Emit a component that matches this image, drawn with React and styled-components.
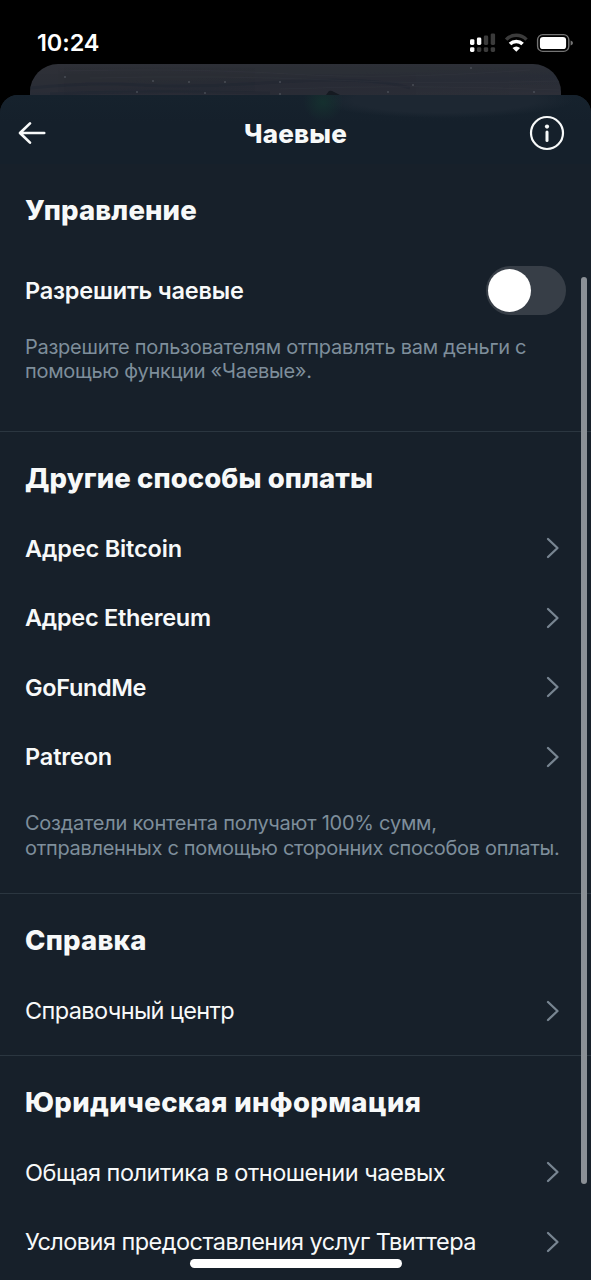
import styled, { createGlobalStyle } from "styled-components";

const otherWays = [
  { label: "Адрес Bitcoin", spacing: -0.15 },
  { label: "Адрес Ethereum", spacing: -0.28 },
  { label: "GoFundMe", spacing: -0.35 },
  { label: "Patreon", spacing: -0.15 },
];

const legal = [
  { label: "Общая политика в отношении чаевых", spacing: -0.48 },
  { label: "Условия предоставления услуг Твиттера", spacing: -0.54 },
];

const specks = [
  [35, 13], [123, 17], [159, 18], [195, 18], [250, 18], [107, 28], [175, 29],
  [250, 30], [358, 28], [504, 28], [441, 4], [383, 21],
];

export default function App() {
  return (
    <Screen>
      <GlobalStyle />
      <StatusBar>
        <Time>10:24</Time>
        <StatusIcons />
      </StatusBar>
      <BackCard>
        <CoverTexture />
      </BackCard>
      <Sheet>
        <Header>
          <IconButton aria-label="Назад">
            <BackIcon />
          </IconButton>
          <HeaderTitle>Чаевые</HeaderTitle>
          <IconButton aria-label="Информация">
            <InfoIcon />
          </IconButton>
        </Header>

        <Section>
          <SectionTitle $spacing={0.1}>Управление</SectionTitle>
          <SwitchRow>
            <Label $bold $spacing={-0.2}>
              Разрешить чаевые
            </Label>
            <Switch role="switch" aria-checked="false">
              <Knob />
            </Switch>
          </SwitchRow>
          <Note $bottom="47px">
            <NoteLine $spacing={-0.26}>Разрешите пользователям отправлять вам деньги с</NoteLine>
            <NoteLine $spacing={-0.28}>помощью функции «Чаевые».</NoteLine>
          </Note>
        </Section>

        <Section $line>
          <SectionTitle $spacing={0.1}>Другие способы оплаты</SectionTitle>
          {otherWays.map((item) => (
            <LinkRow key={item.label} bold {...item} />
          ))}
          <Note $top="19px" $bottom="31.5px" $lineHeight="25.5px">
            <NoteLine $spacing={-0.24}>Создатели контента получают 100% сумм,</NoteLine>
            <NoteLine $spacing={-0.31}>отправленных с помощью сторонних способов оплаты.</NoteLine>
          </Note>
        </Section>

        <Section $line $bottom="9px">
          <SectionTitle $spacing={0.2}>Справка</SectionTitle>
          <LinkRow label="Справочный центр" spacing={-0.62} />
        </Section>

        <Section $line>
          <SectionTitle $spacing={0.36}>Юридическая информация</SectionTitle>
          {legal.map((item) => (
            <LinkRow key={item.label} {...item} />
          ))}
        </Section>
      </Sheet>
      <ScrollThumb />
      <HomeIndicator />
    </Screen>
  );
}

function LinkRow({ label, bold, spacing }) {
  return (
    <Row>
      <Label $bold={bold} $spacing={spacing}>
        {label}
      </Label>
      <Chevron width="14" height="22" viewBox="0 0 14 22">
        <path d="M2 2L11.5 11L2 20" />
      </Chevron>
    </Row>
  );
}

function CoverTexture() {
  return (
    <svg width="531" height="31" viewBox="0 0 531 31" fill="none">
      <g stroke="#202631" strokeWidth="3" opacity="0.45">
        <path d="M0 24Q60 18 110 21T250 18T380 24" />
        <path d="M20 30Q120 26 240 29" />
      </g>
      <g stroke="#383b43" strokeWidth="1" opacity="0.3">
        <path d="M30 7Q160 4 260 10T500 6" />
        <path d="M60 14Q190 11 300 16T528 17" />
        <path d="M250 25Q380 20 530 26" />
      </g>
      <g fill="#565b65" opacity="0.7">
        {specks.map(([x, y]) => (
          <circle key={`${x}-${y}`} cx={x} cy={y} r="1" />
        ))}
      </g>
      <path d="M296 31L299 27Q301 26 304 28L310 31Z" fill="#151a21" />
    </svg>
  );
}

function BackIcon() {
  return (
    <svg width="30" height="26" viewBox="0 0 30 26" fill="none">
      <path
        d="M13 3.4L3 13L13 22.6M3.4 13H27.2"
        stroke="#f7f9f9"
        strokeWidth="2.7"
        strokeLinecap="round"
        strokeLinejoin="round"
      />
    </svg>
  );
}

function InfoIcon() {
  return (
    <svg width="36" height="36" viewBox="0 0 36 36" fill="none">
      <circle cx="18" cy="18" r="16" stroke="#f7f9f9" strokeWidth="2.2" />
      <circle cx="18" cy="11.6" r="2.1" fill="#f7f9f9" />
      <path d="M18 17V25.6" stroke="#f7f9f9" strokeWidth="3" strokeLinecap="round" />
    </svg>
  );
}

function StatusIcons() {
  return (
    <svg width="106" height="22" viewBox="468 32 106 22" fill="none">
      <g fill="#fff">
        <rect x="470" y="39.2" width="4.4" height="5.8" rx="1.4" />
        <rect x="476.9" y="37.6" width="4.4" height="7.4" rx="1.4" />
        <rect x="470" y="47.2" width="4.4" height="4.8" rx="1.4" />
      </g>
      <g fill="#3b3b3b">
        <rect x="483.8" y="35.6" width="4.4" height="9.4" rx="1.4" />
        <rect x="490.7" y="33.4" width="4.4" height="11.6" rx="1.4" />
        <rect x="476.9" y="47.2" width="4.4" height="4.8" rx="1.4" />
        <rect x="483.8" y="47.2" width="4.4" height="4.8" rx="1.4" />
        <rect x="490.7" y="47.2" width="4.4" height="4.8" rx="1.4" />
      </g>
      <path d="M506.1 39.6A14.3 14.3 0 0 1 526.5 39.6" stroke="#3b3b3b" strokeWidth="3.4" />
      <path d="M510 44A9 9 0 0 1 522.6 44" stroke="#fff" strokeWidth="3.6" />
      <path d="M516.3 51.8L512.5 48Q516.3 44.8 520.1 48Z" fill="#fff" />
      <rect x="537.6" y="34.6" width="31.2" height="16.8" rx="5.2" stroke="#747474" strokeWidth="1.4" />
      <rect x="539.9" y="36.9" width="26.2" height="12.2" rx="3.2" fill="#fff" />
      <path d="M570.6 40.4Q573 41.2 573 43Q573 44.8 570.6 45.6Z" fill="#747474" />
    </svg>
  );
}

const GlobalStyle = createGlobalStyle`
  * {
    box-sizing: border-box;
  }
  body {
    margin: 0;
    background: #000;
    overflow: hidden;
    font-family: Inter, "Liberation Sans", sans-serif;
  }
`;

const Screen = styled.div`
  position: relative;
  display: flex;
  flex-direction: column;
  width: 591px;
  height: 1280px;
  background: #000;
  overflow: hidden;
`;

const StatusBar = styled.div`
  display: flex;
  align-items: center;
  justify-content: space-between;
  flex: none;
  height: 64px;
  padding: 22px 17px 0 37px;
`;

const Time = styled.span`
  font-size: 23.5px;
  font-weight: 600;
  line-height: 42px;
  letter-spacing: -0.1px;
  color: #fff;
`;

const BackCard = styled.div`
  flex: none;
  height: 31px;
  margin: 0 30px;
  border-radius: 28px 28px 0 0;
  background: linear-gradient(178deg, #2e3037 0%, #2c2f37 40%, #292d37 62%, #2d2f38 100%);
  overflow: hidden;
`;

const Sheet = styled.div`
  flex: 1;
  border-radius: 18px 18px 0 0;
  background: #17202a;
  overflow: hidden;
`;

const Header = styled.header`
  display: flex;
  align-items: center;
  justify-content: space-between;
  height: 69px;
  padding: 7px 26px 0 17px;
  background:
    radial-gradient(ellipse 20px 20px at 323px 7px, #15302f, transparent),
    radial-gradient(ellipse 130px 18px at 444px 5px, #1d2732 70%, transparent),
    linear-gradient(#16222d, #15202b 40%);
`;

const HeaderTitle = styled.h1`
  margin: 0 0 0 15px;
  font-size: 26px;
  font-weight: 800;
  letter-spacing: 0.2px;
  color: #f7f9f9;
`;

const IconButton = styled.button`
  display: flex;
  padding: 0;
  border: none;
  background: none;
`;

const Section = styled.section`
  padding-bottom: ${(p) => p.$bottom || 0};
  border-top: ${(p) => (p.$line ? "1px solid #2b3640" : "none")};
`;

const SectionTitle = styled.h2`
  display: flex;
  align-items: center;
  height: 82px;
  margin: 0;
  padding: 10px 25px 0;
  font-size: 27.5px;
  font-weight: 800;
  letter-spacing: ${(p) => p.$spacing || 0}px;
  color: #f7f9f9;
`;

const Row = styled.div`
  display: flex;
  align-items: center;
  justify-content: space-between;
  height: 69.5px;
  padding: 0 31px 0 25px;
`;

const SwitchRow = styled(Row)`
  height: 88.5px;
  padding-right: 25px;
`;

const Label = styled.span`
  font-size: 23.5px;
  font-weight: ${(p) => (p.$bold ? 600 : 400)};
  letter-spacing: ${(p) => p.$spacing || 0}px;
  white-space: nowrap;
  color: #f7f9f9;
`;

const Switch = styled.button`
  display: flex;
  align-items: center;
  width: 80px;
  height: 49px;
  padding: 0 2px;
  border: none;
  border-radius: 25px;
  background: #373e47;
`;

const Knob = styled.span`
  width: 43px;
  height: 43px;
  border-radius: 50%;
  background: #fff;
`;

const Note = styled.p`
  margin: 0;
  padding: ${(p) => p.$top || 0} 0 ${(p) => p.$bottom} 25px;
  font-size: 20px;
  line-height: ${(p) => p.$lineHeight || "24.5px"};
  color: #7e8e9b;
`;

const NoteLine = styled.span`
  display: block;
  white-space: nowrap;
  letter-spacing: ${(p) => p.$spacing || 0}px;
`;

const Chevron = styled.svg`
  fill: none;
  stroke: #788591;
  stroke-width: 2.3;
  stroke-linecap: round;
  stroke-linejoin: round;
`;

const ScrollThumb = styled.div`
  position: absolute;
  top: 277px;
  right: 4px;
  width: 6px;
  height: 907px;
  border-radius: 3px;
  background: #8b9096;
`;

const HomeIndicator = styled.div`
  position: absolute;
  left: 190px;
  bottom: 12px;
  width: 212px;
  height: 9px;
  border-radius: 5px;
  background: #fff;
`;
